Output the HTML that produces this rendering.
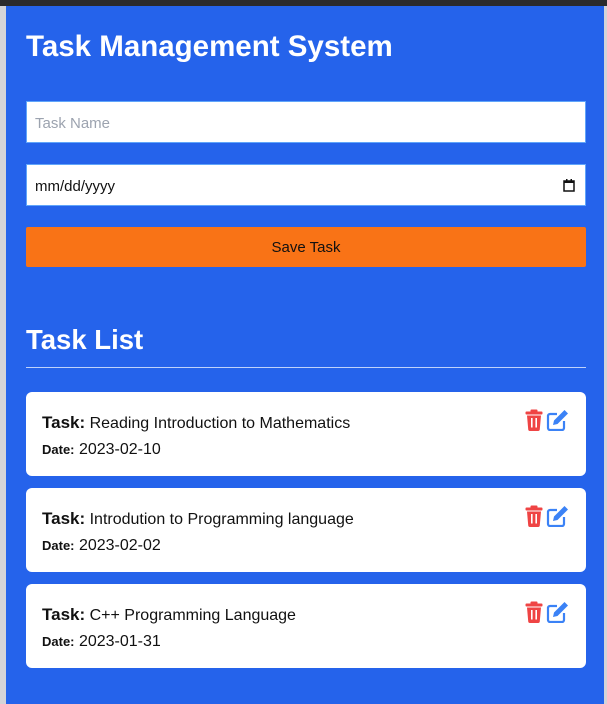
<!DOCTYPE html>
<html><head><meta charset="utf-8"><style>
*{box-sizing:border-box;margin:0;padding:0}
body{width:607px;height:704px;overflow:hidden;background:#d4d4d8;font-family:"Liberation Sans",sans-serif;position:relative}
.top{position:absolute;left:0;top:0;width:607px;height:6px;background:#2b2b2d}
.main{position:absolute;left:6px;top:6px;width:598px;height:698px;background:#2563eb}
.a{position:absolute;left:20px;width:560px}
h1{position:absolute;left:20px;top:24px;color:#fff;font-size:29.5px;font-weight:bold}
h2{position:absolute;left:20px;top:318px;color:#fff;font-size:27.5px;font-weight:bold}
.inp{background:#fff;border:1px solid #60a5fa;height:42px;font-size:15px;padding:0 8px;line-height:43px}
.btn{background:#f97316;height:40px;text-align:center;line-height:42px;font-size:15px;color:#111;border-radius:2px}
.hr{height:1px;background:#bfd3fb}
.card{background:#fff;border-radius:6px;height:84px;padding:0 16px}
.t{position:absolute;top:21px;left:16px;font-size:16px;color:#111}
.t b{font-size:17px}
.d{position:absolute;top:49px;left:16px;font-size:16px;color:#111}
.d b{font-size:13px}
.ic{position:absolute;top:17px;right:17px}
</style></head><body>
<div class="top"></div>
<div class="main">
<h1>Task Management System</h1>
<div class="a inp" style="top:95px;color:#9ca3af">Task Name</div>
<div class="a inp" style="top:158px;color:#111">mm/dd/yyyy
<svg style="position:absolute;right:10px;top:14px" width="12" height="13" viewBox="0 0 12 13"><rect x="1" y="2" width="10" height="10" fill="none" stroke="#111" stroke-width="1.5"/><rect x="1" y="2" width="10" height="2" fill="#111"/><rect x="3" y="0" width="1.5" height="3" fill="#111"/><rect x="7.5" y="0" width="1.5" height="3" fill="#111"/></svg></div>
<div class="a btn" style="top:221px">Save Task</div>
<h2>Task List</h2>
<div class="a hr" style="top:361px"></div>
<div class="a card" style="top:386px"><div class="t"><b>Task:</b> Reading Introduction to Mathematics</div><div class="d"><b>Date:</b> 2023-02-10</div><div class="ic">ICONS</div></div>
<div class="a card" style="top:482px"><div class="t"><b>Task:</b> Introdution to Programming language</div><div class="d"><b>Date:</b> 2023-02-02</div><div class="ic">ICONS</div></div>
<div class="a card" style="top:578px"><div class="t"><b>Task:</b> C++ Programming Language</div><div class="d"><b>Date:</b> 2023-01-31</div><div class="ic">ICONS</div></div>
</div>
<script>
var s='<svg width="44" height="22" viewBox="0 0 44 22"><g fill="#ef4444"><rect x="0.5" y="2.5" width="17" height="3" rx="1"/><rect x="5.5" y="0.5" width="7" height="3" rx="1"/><path d="M2 6.5h14l-1.2 13.8a1.7 1.7 0 0 1-1.7 1.7H4.9a1.7 1.7 0 0 1-1.7-1.7z"/></g><g fill="#fff"><rect x="6" y="9" width="1.6" height="9.5"/><rect x="10.4" y="9" width="1.6" height="9.5"/></g><g fill="none" stroke="#3b82f6" stroke-width="2.2"><path d="M32 5H25a2 2 0 0 0-2 2v12a2 2 0 0 0 2 2h12a2 2 0 0 0 2-2v-7"/></g><path fill="#3b82f6" d="M39.5 1l3.5 3.5-10.5 10.5-4.5 1 1-4.5z"/></svg>';
document.querySelectorAll('.ic').forEach(function(e){e.innerHTML=s});
</script>
</body></html>
